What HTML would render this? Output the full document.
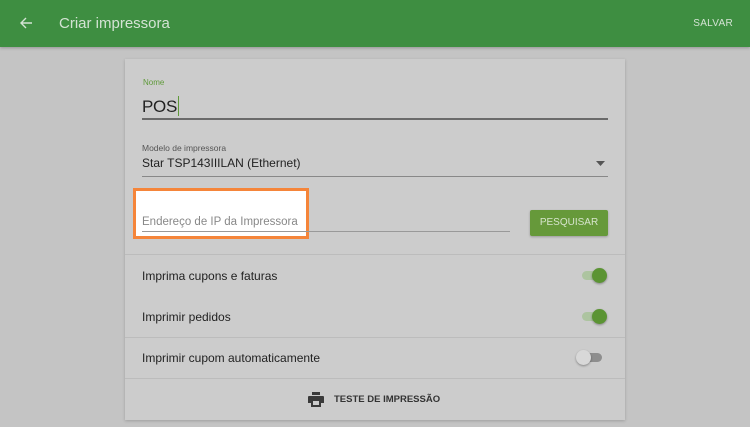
<!DOCTYPE html>
<html><head><meta charset="utf-8"><style>
*{margin:0;padding:0;box-sizing:border-box}
body{width:750px;height:427px;background:#c4c4c4;font-family:"Liberation Sans",Roboto,sans-serif;position:relative;overflow:hidden}
.hdr{position:absolute;left:0;top:0;width:750px;height:47px;background:#3e8e41;box-shadow:0 1px 3px rgba(0,0,0,.25)}
.hdr .t{position:absolute;left:59px;top:15px;font-size:15px;color:#d4e3d4}
.hdr .s{position:absolute;right:17px;top:18px;font-size:10px;color:#d4e3d4;letter-spacing:.3px}
.card{position:absolute;left:125px;top:59px;width:500px;height:361px;background:#cccccc;box-shadow:0 1px 3px rgba(0,0,0,.2)}
.a{position:absolute;font-size:12px;color:#222;white-space:nowrap}
.line{position:absolute;height:1px;background:#777}
.sep{position:absolute;left:0;width:500px;height:1px;background:#bcbcbc}
.tog{position:absolute;width:20px;height:9px;border-radius:5px}
.knob{position:absolute;width:15px;height:15px;border-radius:50%;box-shadow:0 1px 2px rgba(0,0,0,.35)}
</style></head><body>
<div class="hdr">
<svg style="position:absolute;left:19px;top:16px" width="14" height="14" viewBox="0 0 14 14"><path d="M13 7H2M7 2L2 7l5 5" stroke="#d4e3d4" stroke-width="1.4" fill="none"/></svg>
<div class="t">Criar impressora</div>
<div class="s">SALVAR</div>
</div>
<div class="card">
<div class="a" style="left:18px;top:19px;font-size:8px;color:#5f9a3a">Nome</div>
<div class="a" style="left:17px;top:37px;font-size:17px;color:#222;letter-spacing:-0.3px">POS<span style="display:inline-block;width:1px;height:20px;background:#5f9a3a;vertical-align:-4px;margin-left:1px"></span></div>
<div class="line" style="left:17px;top:59px;width:466px;height:1.5px;background:#6a6a6a"></div>
<div class="a" style="left:17px;top:84px;font-size:8.5px;color:#555">Modelo de impressora</div>
<div class="a" style="left:17px;top:97px;font-size:12px">Star TSP143IIILAN (Ethernet)</div>
<svg style="position:absolute;left:471px;top:102px" width="9" height="5"><path d="M0 0h9L4.5 5z" fill="#555"/></svg>
<div class="line" style="left:17px;top:117px;width:466px;background:#888"></div>
<div style="position:absolute;left:8px;top:129px;width:176px;height:51px;background:#fff;border:3px solid #f5853a"></div>
<div class="a" style="left:17px;top:157px;font-size:11.5px;color:#888">Endereço de IP da Impressora</div>
<div class="line" style="left:17px;top:172px;width:368px;background:#999"></div>
<div style="position:absolute;left:405px;top:151px;width:78px;height:26px;background:#66993a;border-radius:2px;box-shadow:0 1px 2px rgba(0,0,0,.25);color:#d6e4cc;font-size:10px;text-align:center;line-height:26px">PESQUISAR</div>
<div class="sep" style="top:195px"></div>
<div class="a" style="left:17px;top:210px">Imprima cupons e faturas</div>
<div class="tog" style="left:457px;top:212px;background:#adc4a0"></div><div class="knob" style="left:467px;top:209px;background:#5b9433"></div>
<div class="a" style="left:17px;top:251px">Imprimir pedidos</div>
<div class="tog" style="left:457px;top:253px;background:#adc4a0"></div><div class="knob" style="left:467px;top:250px;background:#5b9433"></div>
<div class="sep" style="top:278px"></div>
<div class="a" style="left:17px;top:292px">Imprimir cupom automaticamente</div>
<div class="tog" style="left:457px;top:294px;background:#8e8e8e"></div><div class="knob" style="left:451px;top:291px;background:#d8d8d8"></div>
<div class="sep" style="top:319px"></div>
<svg style="position:absolute;left:183px;top:333px" width="16" height="15" viewBox="0 0 16 15"><path d="M4 0h8v3H4zM1 4h14a1 1 0 0 1 1 1v6h-3v4H3v-4H0V5a1 1 0 0 1 1-1zM5 9v4h6V9z" fill="#3a3a3a"/></svg>
<div class="a" style="left:209px;top:335px;font-size:9.5px;font-weight:bold;color:#333">TESTE DE IMPRESSÃO</div>
</div>
</body></html>
